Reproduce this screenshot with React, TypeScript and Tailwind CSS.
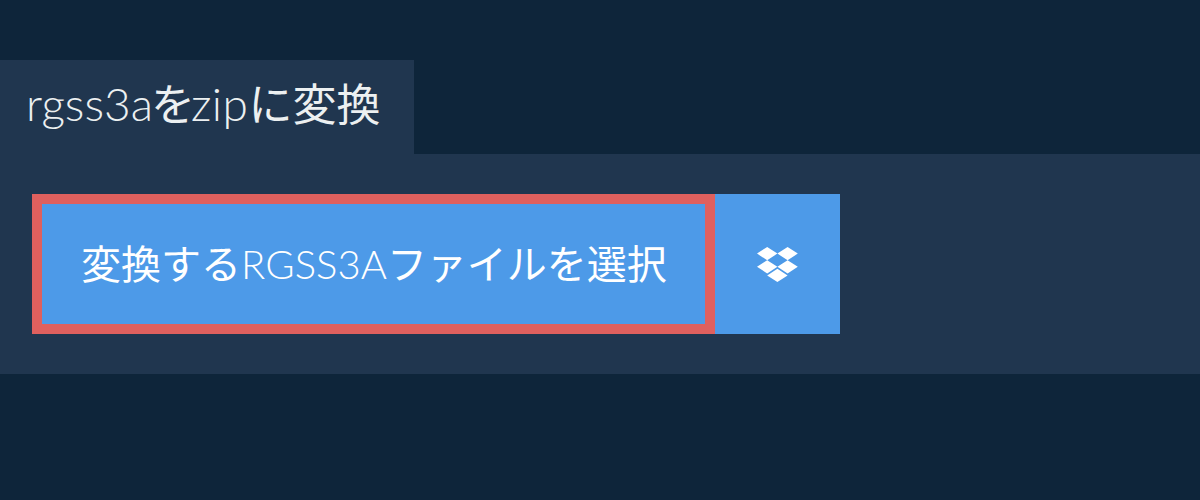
export default function App() {
  return (
    <div className="h-[500px] w-[1200px] overflow-hidden bg-[#0e253a] pt-[60px] font-['Lato','Noto_Sans_CJK_JP',sans-serif]">
      <h1 className="h-[94px] w-[414px] bg-[#20364f] pl-[26px] text-[44px] leading-[88px] font-normal text-[#ecf0f1]">
        <span className="text-[46px] font-light">rgss3a</span>
        <span className="-ml-[2px] -mr-[4px]">を</span>
        <span className="text-[46px] font-light tracking-[0.5px]">zip</span>に変換
      </h1>
      <div className="flex h-[220px] items-center bg-[#20364f] px-8">
        <button className="flex h-[140px] w-[683px] items-center justify-center border-[10px] border-[#df605e] bg-[#4d9ae8] text-[40px] font-normal text-white">
          <span className="ml-px">変換する<span className="font-light">RGSS3A</span>ファイルを選択</span>
        </button>
        <button className="flex h-[140px] w-[125px] items-center justify-center bg-[#4d9ae8] text-white">
          <svg className="mt-[2px]" width="41" height="36" viewBox="0 0 41 36" fill="currentColor">
            <path d="M10.2 0 20.4 6.6 10.2 13.2 0 6.6ZM30.6 0 40.8 6.6 30.6 13.2 20.4 6.6ZM10.2 13.2 20.4 19.8 10.2 26.4 0 19.8ZM30.6 13.2 40.8 19.8 30.6 26.4 20.4 19.8ZM20.4 21.8 30.6 28.4 20.4 35 10.2 28.4Z" />
          </svg>
        </button>
      </div>
    </div>
  );
}
